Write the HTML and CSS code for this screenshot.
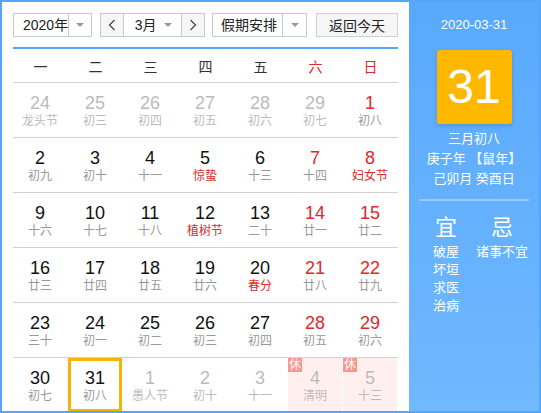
FILE: index.html
```html
<!DOCTYPE html>
<html lang="zh">
  <head>
    <meta charset="UTF-8" />
    <meta name="viewport" content="width=device-width, initial-scale=1.0" />
    <title>万年历</title>
    <link rel="stylesheet" href="styles.css">
  </head>
  <body>
    <div class="calendar">
      <div class="main">
        <div class="toolbar">
          <div class="select year-select">
            <span class="select-text">2020年</span>
            <span class="select-arrow"><i class="caret"></i></span>
          </div>

          <div class="month-group">
            <span class="nav-btn">
              <svg width="8" height="12" viewBox="0 0 8 12"><path d="M6.5 1 L1.5 6 L6.5 11" fill="none" stroke="#444" stroke-width="1.2"/></svg>
            </span>
            <span class="month-text">3月 <i class="caret"></i></span>
            <span class="nav-btn">
              <svg width="8" height="12" viewBox="0 0 8 12"><path d="M1.5 1 L6.5 6 L1.5 11" fill="none" stroke="#444" stroke-width="1.2"/></svg>
            </span>
          </div>

          <div class="select holiday-select">
            <span class="select-text">假期安排</span>
            <span class="select-arrow"><i class="caret"></i></span>
          </div>

          <button class="btn-today">返回今天</button>
        </div>

        <div class="weekdays">
          <span>一</span><span>二</span><span>三</span><span>四</span><span>五</span>
          <span class="red">六</span><span class="red">日</span>
        </div>

        <div class="week">
          <div class="day other"><b>24</b><small>龙头节</small></div>
          <div class="day other"><b>25</b><small>初三</small></div>
          <div class="day other"><b>26</b><small>初四</small></div>
          <div class="day other"><b>27</b><small>初五</small></div>
          <div class="day other"><b>28</b><small>初六</small></div>
          <div class="day other"><b>29</b><small>初七</small></div>
          <div class="day weekend"><b>1</b><small>初八</small></div>
        </div>

        <div class="week">
          <div class="day"><b>2</b><small>初九</small></div>
          <div class="day"><b>3</b><small>初十</small></div>
          <div class="day"><b>4</b><small>十一</small></div>
          <div class="day"><b>5</b><small class="fest">惊蛰</small></div>
          <div class="day"><b>6</b><small>十三</small></div>
          <div class="day weekend"><b>7</b><small>十四</small></div>
          <div class="day weekend"><b>8</b><small class="fest">妇女节</small></div>
        </div>

        <div class="week">
          <div class="day"><b>9</b><small>十六</small></div>
          <div class="day"><b>10</b><small>十七</small></div>
          <div class="day"><b>11</b><small>十八</small></div>
          <div class="day"><b>12</b><small class="fest">植树节</small></div>
          <div class="day"><b>13</b><small>二十</small></div>
          <div class="day weekend"><b>14</b><small>廿一</small></div>
          <div class="day weekend"><b>15</b><small>廿二</small></div>
        </div>

        <div class="week">
          <div class="day"><b>16</b><small>廿三</small></div>
          <div class="day"><b>17</b><small>廿四</small></div>
          <div class="day"><b>18</b><small>廿五</small></div>
          <div class="day"><b>19</b><small>廿六</small></div>
          <div class="day"><b>20</b><small class="fest">春分</small></div>
          <div class="day weekend"><b>21</b><small>廿八</small></div>
          <div class="day weekend"><b>22</b><small>廿九</small></div>
        </div>

        <div class="week">
          <div class="day"><b>23</b><small>三十</small></div>
          <div class="day"><b>24</b><small>初一</small></div>
          <div class="day"><b>25</b><small>初二</small></div>
          <div class="day"><b>26</b><small>初三</small></div>
          <div class="day"><b>27</b><small>初四</small></div>
          <div class="day weekend"><b>28</b><small>初五</small></div>
          <div class="day weekend"><b>29</b><small>初六</small></div>
        </div>

        <div class="week">
          <div class="day"><b>30</b><small>初七</small></div>
          <div class="day selected"><b>31</b><small>初八</small></div>
          <div class="day other"><b>1</b><small>愚人节</small></div>
          <div class="day other"><b>2</b><small>初十</small></div>
          <div class="day other"><b>3</b><small>十一</small></div>
          <div class="day other holiday"><span class="badge">休</span><b>4</b><small>清明</small></div>
          <div class="day other holiday"><span class="badge">休</span><b>5</b><small>十三</small></div>
        </div>
      </div>

      <div class="side">
        <div class="side-date">2020-03-31</div>
        <div class="side-day">31</div>
        <div class="side-lunar">
          <p>三月初八</p>
          <p>庚子年 【鼠年】</p>
          <p>己卯月 癸酉日</p>
        </div>
        <div class="side-line"></div>
        <div class="yiji">
          <div class="yi">
            <h2>宜</h2>
            <p>破屋</p>
            <p>坏垣</p>
            <p>求医</p>
            <p>治病</p>
          </div>
          <div class="ji">
            <h2>忌</h2>
            <p>诸事不宜</p>
          </div>
        </div>
      </div>
    </div>
  </body>
</html>
```

FILE: styles.css
```css
* {
  margin: 0;
  padding: 0;
  box-sizing: border-box;
}

body {
  font-family: "Liberation Sans", "Noto Sans CJK SC", sans-serif;
  background: #fff;
}

.calendar {
  width: 541px;
  height: 413px;
  border: 2px solid #55a6fb;
  display: flex;
  overflow: hidden;
}

.main {
  width: 407px;
  padding: 0 11px;
  background: white;
}

/* toolbar */
.toolbar {
  display: flex;
  align-items: center;
  padding: 11px 0 10px;
  border-bottom: 2px solid #55a6fb;
}

.select,
.month-group {
  display: flex;
  height: 24px;
  border: 1px solid #c8c8c8;
  background: white;
  font-size: 14px;
  color: #222;
  white-space: nowrap;
}

.select-text {
  display: flex;
  align-items: center;
  padding-left: 9px;
  border-right: 1px solid #c8c8c8;
  line-height: 22px;
}

.select-arrow {
  display: flex;
  align-items: center;
  justify-content: center;
  flex: 1;
}

.caret {
  display: inline-block;
  width: 0;
  height: 0;
  border-left: 4px solid transparent;
  border-right: 4px solid transparent;
  border-top: 4px solid #999;
}

.year-select {
  width: 79px;
}

.year-select .select-text {
  width: 55px;
}

.month-group {
  width: 105px;
  margin-left: 8px;
}

.nav-btn {
  width: 22px;
  display: flex;
  align-items: center;
  justify-content: center;
  background: #f6f6f6;
}

.month-text {
  width: 60px;
  border-left: 1px solid #c8c8c8;
  border-right: 1px solid #c8c8c8;
  display: flex;
  align-items: center;
  justify-content: space-between;
  padding: 0 9px 0 11px;
  line-height: 22px;
}

.holiday-select {
  width: 95px;
  margin-left: 7px;
}

.holiday-select .select-text {
  width: 70px;
  padding-left: 8px;
}

.btn-today {
  width: 82px;
  height: 24px;
  margin-left: 9px;
  border: 1px solid #d0d0d0;
  background: #f6f6f6;
  font-family: inherit;
  font-size: 14px;
  color: #222;
}

/* grid */
.weekdays {
  display: grid;
  grid-template-columns: repeat(7, 55px);
  height: 33px;
  align-items: center;
  font-size: 14px;
  color: #333;
  text-align: center;
}

.red {
  color: #e02828;
}

.week {
  display: grid;
  grid-template-columns: repeat(7, 55px);
  border-top: 1px solid #d2d2d2;
}

.day {
  position: relative;
  width: 54px;
  height: 54px;
  padding-top: 10px;
  text-align: center;
}

.day b {
  display: block;
  font-weight: normal;
  font-size: 18px;
  line-height: 20px;
  color: #111;
}

.day small {
  display: block;
  font-size: 12px;
  line-height: 16px;
  color: #999;
}

.day.weekend b {
  color: #e02828;
}

.day small.fest {
  color: #e02828;
}

.day.other b,
.day.other small {
  color: #bbb;
}

.day.selected {
  border: 3px solid #f6b400;
  padding-top: 7px;
}

.day.holiday {
  background: #fff0ef;
}

.badge {
  position: absolute;
  top: 0;
  left: 0;
  width: 14px;
  height: 14px;
  background: #f8968f;
  color: white;
  font-size: 12px;
  line-height: 14px;
}

/* side panel */
.side {
  flex: 1;
  background: linear-gradient(180deg, #58a9fd 0%, #70b8ff 100%);
  color: white;
  text-align: center;
}

.side-date {
  font-size: 13px;
  line-height: 20px;
  padding-top: 13px;
}

.side-day {
  width: 75px;
  height: 74px;
  margin: 15px auto 0;
  background: #ffb800;
  border-radius: 3px;
  box-shadow: 0 2px 4px rgba(0, 0, 0, 0.15);
  font-size: 48px;
  line-height: 74px;
}

.side-lunar {
  margin-top: 5px;
  font-size: 13px;
  line-height: 20px;
}

.side-line {
  height: 2px;
  margin: 10px 10px 0;
  background: rgba(255, 255, 255, 0.35);
}

.yiji {
  display: flex;
  padding-left: 24px;
  margin-top: 14px;
  text-align: left;
}

.yiji h2 {
  font-weight: normal;
  font-size: 22px;
  line-height: 26px;
  margin-bottom: 2px;
}

.yiji p {
  font-size: 13px;
  line-height: 18px;
}

.yi {
  width: 26px;
}

.yi h2 {
  width: 26px;
  text-align: center;
}

.ji {
  margin-left: 17px;
  width: 52px;
}

.ji h2 {
  text-align: center;
}
```
